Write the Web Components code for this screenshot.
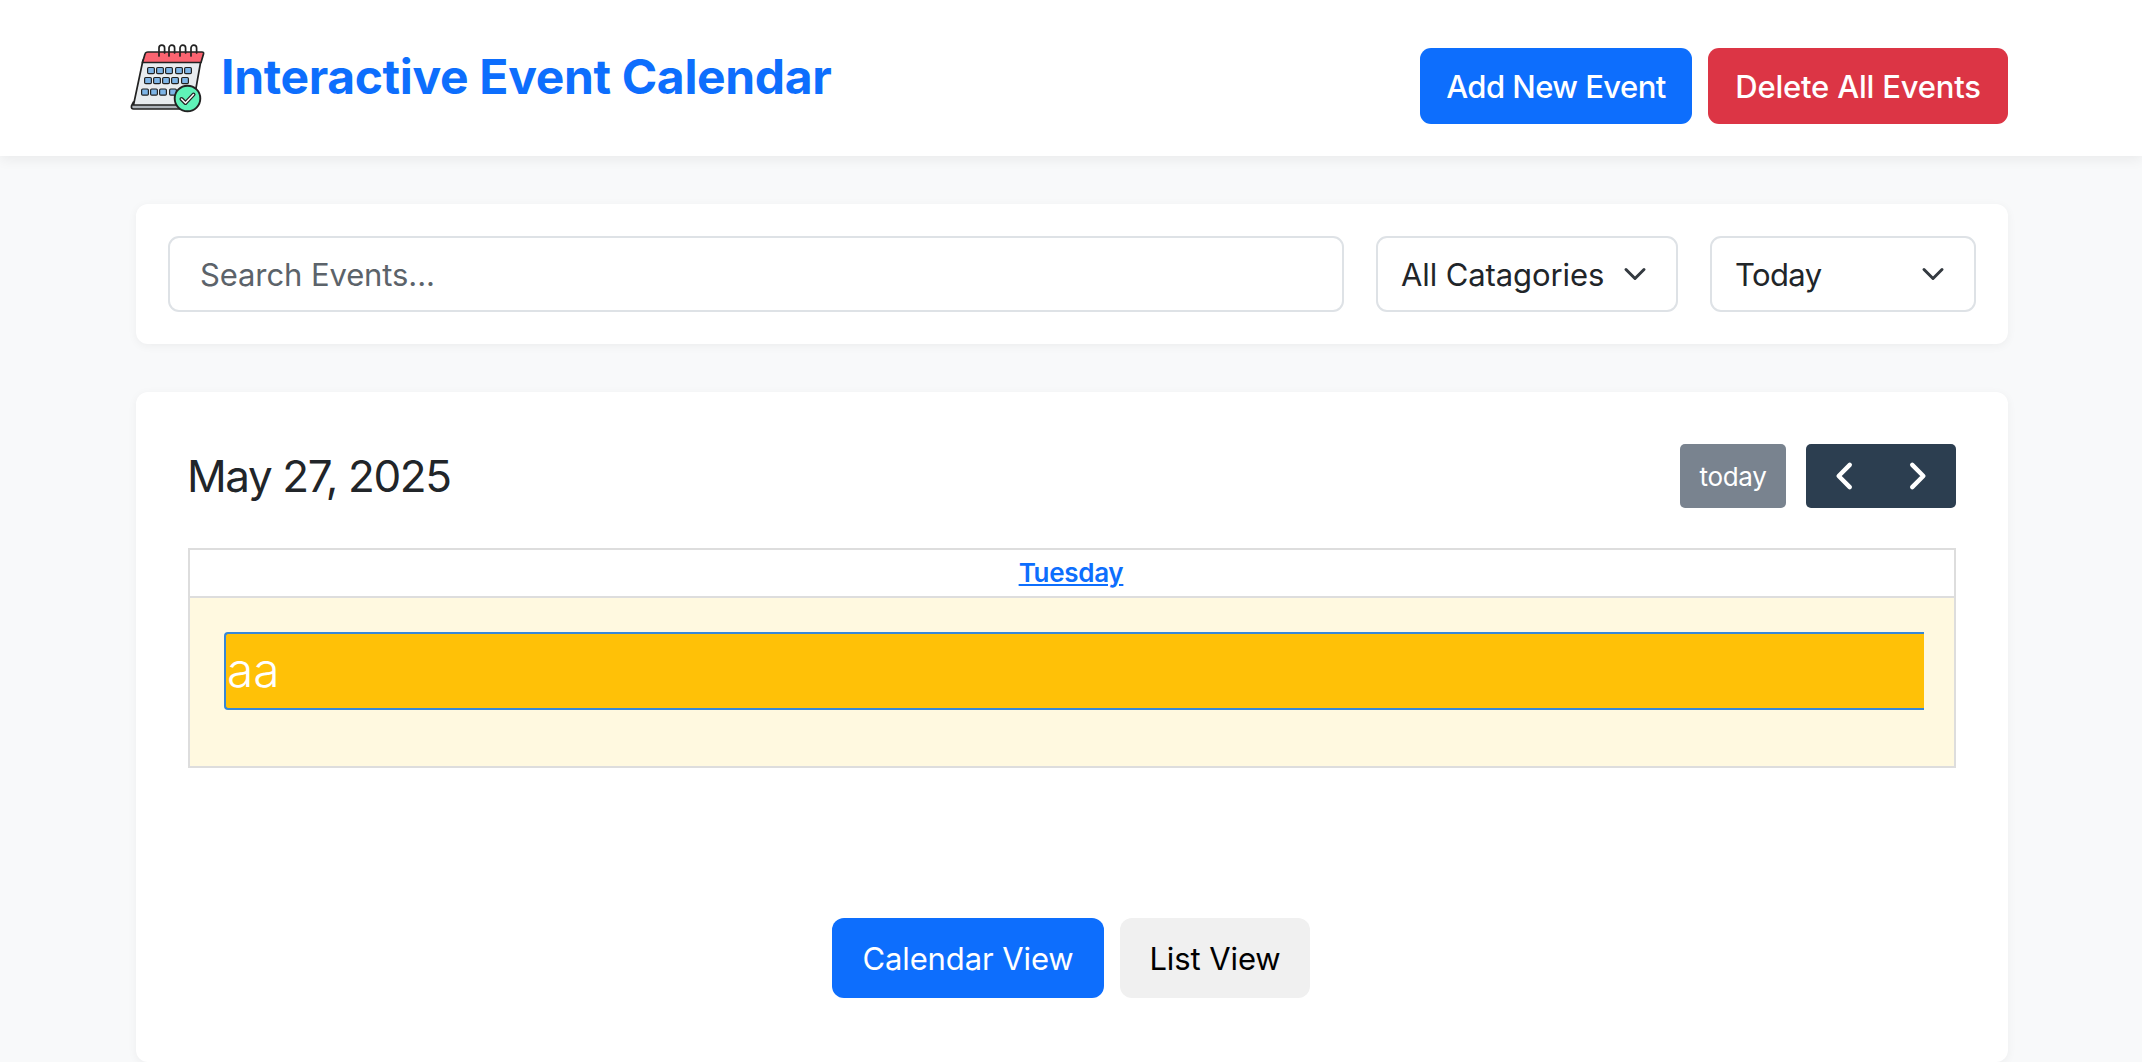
<!DOCTYPE html>
<html lang="en">
<head>
<meta charset="utf-8">
<title>Interactive Event Calendar</title>
<style>
  html, body { margin: 0; padding: 0; }
  body {
    background: #f8f9fa;
    font-family: Inter, "Noto Sans", sans-serif;
    color: #212529;
    overflow: hidden;
    height: 1062px;
  }
</style>
</head>
<body>
<app-header>
  <span slot="title">Interactive Event Calendar</span>
  <app-button slot="actions" kind="primary">Add New Event</app-button>
  <app-button slot="actions" kind="danger">Delete All Events</app-button>
</app-header>
<page-main>
  <filter-bar></filter-bar>
  <event-calendar date="May 27, 2025" weekday="Tuesday">
    <calendar-event>aa</calendar-event>
  </event-calendar>
</page-main>

<script>
class LogoIcon extends HTMLElement {
  constructor() {
    super();
    const shadow = this.attachShadow({ mode: 'open' });
    let cells = '';
    const rows = [
      [27.5, [24, 33, 42, 52, 61]],
      [37.5, [21, 30, 39, 48, 58]],
      [49, [18, 27, 36, 46]]
    ];
    rows.forEach(([y, xs]) => {
      xs.forEach(x => {
        cells += `<rect x="${x - 3.4}" y="${y}" width="6.8" height="6.2" rx="1.2" fill="#7db4e6" stroke="#222" stroke-width="1.2"/>`;
      });
    });
    let rings = '';
    [32, 42, 53, 64].forEach(x => {
      rings += `<path d="M${x} 16 v-8 a2.8 2.8 0 0 1 5.6 0 v5" fill="none" stroke="#222" stroke-width="1.7" stroke-linecap="round"/>`;
    });
    shadow.innerHTML = `
      <style>
        :host { display: block; width: 80px; height: 80px; flex: none; }
        svg { display: block; width: 80px; height: 80px; }
      </style>
      <svg viewBox="0 0 80 80" aria-hidden="true">
        <path d="M6.500 62 L4.500 66 Q4 69 6.500 69 L58 69 L66 62 Z" fill="#aeb4ba" stroke="#222" stroke-width="1.700" stroke-linejoin="round"/>
        <path d="M16 20 L74 20 L66 65 L6.500 65 Z" fill="#e8ecef" stroke="#222" stroke-width="1.700" stroke-linejoin="round"/>
        <path d="M18 14 Q18.500 12 21 12 L75 12 Q77 12 76.500 14 L74 22.500 L15.500 22.500 Z" fill="#fb6471" stroke="#222" stroke-width="1.700" stroke-linejoin="round"/>
        ${rings}
        ${cells}
        <circle cx="60.500" cy="58.500" r="12.800" fill="#5ff2b8" stroke="#222" stroke-width="1.900"/>
        <path d="M54.500 59 L58.500 63 L66.500 54.500" fill="none" stroke="#222" stroke-width="4" stroke-linecap="round" stroke-linejoin="round"/>
        <path d="M54.500 59 L58.500 63 L66.500 54.500" fill="none" stroke="#fff" stroke-width="1.500" stroke-linecap="round" stroke-linejoin="round"/>
      </svg>`;
  }
}

class AppButton extends HTMLElement {
  static get observedAttributes() { return ['kind']; }

  constructor() {
    super();
    const shadow = this.attachShadow({ mode: 'open' });
    shadow.innerHTML = `
      <style>
        :host { display: inline-block; }
        button {
          display: block;
          height: 76px;
          padding: 0;
          border: 0;
          border-radius: 11px;
          font: 500 31px/1 Inter, "Noto Sans", sans-serif;
          color: #fff;
          white-space: nowrap;
        }
        :host([kind="primary"]) button { width: 272px; background: #0d6efd; letter-spacing: -0.55px; }
        :host([kind="danger"]) button { width: 300px; background: #dc3545; letter-spacing: -0.2px; }
      </style>
      <button type="button"><slot></slot></button>`;
  }
}

class AppHeader extends HTMLElement {
  constructor() {
    super();
    const shadow = this.attachShadow({ mode: 'open' });
    shadow.innerHTML = `
      <style>
        :host {
          display: block;
          background: #fff;
          box-shadow: 0 4px 12px rgba(0,0,0,0.06);
          position: relative;
        }
        .bar {
          width: 1872px;
          height: 156px;
          margin-left: 136px;
          box-sizing: border-box;
          padding: 40px 0 32px;
          display: flex;
          justify-content: space-between;
        }
        .brand { display: flex; align-items: flex-start; gap: 14px; margin-left: -9px; }
        h1 {
          margin: 0;
          padding-top: 6px;
          font: 700 48px/62px Inter, "Noto Sans", sans-serif;
          letter-spacing: -0.35px;
          color: #0d6efd;
        }
        .actions { display: flex; align-self: flex-end; gap: 16px; }
      </style>
      <div class="bar">
        <div class="brand">
          <logo-icon></logo-icon>
          <h1><slot name="title"></slot></h1>
        </div>
        <div class="actions"><slot name="actions"></slot></div>
      </div>`;
  }
}

class PageMain extends HTMLElement {
  constructor() {
    super();
    const shadow = this.attachShadow({ mode: 'open' });
    shadow.innerHTML = `
      <style>
        :host {
          display: flex;
          flex-direction: column;
          gap: 48px;
          width: 1872px;
          margin: 48px 0 0 136px;
        }
      </style>
      <slot></slot>`;
  }
}

class FilterBar extends HTMLElement {
  constructor() {
    super();
    const shadow = this.attachShadow({ mode: 'open' });
    const chevron = "url(\"data:image/svg+xml,%3csvg xmlns='http://www.w3.org/2000/svg' viewBox='0 0 16 16'%3e%3cpath fill='none' stroke='%23343a40' stroke-linecap='round' stroke-linejoin='round' stroke-width='2' d='m2 5 6 6 6-6'/%3e%3c/svg%3e\")";
    shadow.innerHTML = `
      <style>
        :host {
          display: flex;
          gap: 32px;
          padding: 32px;
          background: #fff;
          border-radius: 12px;
          box-shadow: 0 2px 10px rgba(0,0,0,0.05);
        }
        input, select {
          box-sizing: border-box;
          height: 76px;
          background-color: #fff;
          border: 2px solid #dee2e6;
          border-radius: 11px;
          font: 400 31px Inter, "Noto Sans", sans-serif;
          letter-spacing: -0.1px;
          color: #212529;
          outline: none;
        }
        input { flex: 1; min-width: 0; padding: 0 30px; }
        input::placeholder { color: #5c636a; opacity: 1; }
        select {
          appearance: none;
          padding: 0 23px;
          background-image: ${chevron};
          background-repeat: no-repeat;
          background-position: right 29px center;
          background-size: 24px 24px;
        }
        .cat { width: 302px; }
        .range { width: 266px; letter-spacing: -0.6px; }
      </style>
      <input type="text" placeholder="Search Events..." aria-label="Search Events">
      <select class="cat" aria-label="Category"><option>All Catagories</option></select>
      <select class="range" aria-label="Range"><option>Today</option></select>`;
  }
}

class CalendarEvent extends HTMLElement {
  constructor() {
    super();
    const shadow = this.attachShadow({ mode: 'open' });
    shadow.innerHTML = `
      <style>
        :host {
          display: block;
          height: 78px;
          box-sizing: border-box;
          background: #ffc107;
          border: 2px solid #3788d8;
          border-right: 0;
          border-radius: 4px 0 0 4px;
          color: #fff;
          font: 300 48px/72px Inter, "Noto Sans", sans-serif;
          padding-left: 1px;
        }
      </style>
      <slot></slot>`;
  }
}

class EventCalendar extends HTMLElement {
  static get observedAttributes() { return ['date', 'weekday']; }

  constructor() {
    super();
    const shadow = this.attachShadow({ mode: 'open' });
    shadow.innerHTML = `
      <style>
        :host {
          display: block;
          box-sizing: border-box;
          height: 670px;
          padding: 52px 52px 0;
          background: #fff;
          border-radius: 12px;
          box-shadow: 0 2px 10px rgba(0,0,0,0.05);
        }
        .toolbar { display: flex; justify-content: space-between; align-items: center; height: 64px; }
        h2 { margin: 0 0 0 -1px; font: 400 44px/1 Inter, "Noto Sans", sans-serif; letter-spacing: -1.4px; color: #212529; }
        .tools { display: flex; gap: 20px; }
        .today, .nav {
          height: 64px;
          border-radius: 5px;
          display: flex;
          align-items: center;
          justify-content: center;
          color: #fff;
        }
        .today { width: 106px; background: #79838f; font-size: 26px; letter-spacing: -0.3px; }
        .nav { width: 150px; background: #2c3e50; gap: 34px; }
        .nav svg { display: block; width: 38px; height: 38px; }
        .grid {
          margin-top: 40px;
          border: 2px solid #ddd;
        }
        .head {
          height: 46px;
          box-sizing: border-box;
          padding-right: 2px;
          display: flex;
          align-items: center;
          justify-content: center;
          border-bottom: 2px solid #ddd;
          height: 48px;
        }
        .head a {
          color: #0d6efd;
          font: 600 26px/1 Inter, "Noto Sans", sans-serif;
          letter-spacing: -0.3px;
          text-decoration: underline;
        }
        .day { height: 168px; box-sizing: border-box; padding: 34px 30px 0 34px; background: #fff9e0; }
        .views { display: flex; justify-content: center; gap: 16px; margin-top: 150px; padding-right: 2px; }
        .views button {
          height: 80px;
          padding: 0;
          border: 0;
          border-radius: 12px;
          font: 400 31px/1 Inter, "Noto Sans", sans-serif;
          letter-spacing: -0.1px;
        }
        .views .on { width: 272px; background: #0d6efd; color: #fff; }
        .views .off { width: 190px; background: #f0f0f0; color: #000; }
      </style>
      <div class="toolbar">
        <h2 id="date"></h2>
        <div class="tools">
          <div class="today">today</div>
          <div class="nav">
            <svg viewBox="0 0 24 24" fill="none" stroke="#fff" stroke-width="2.800" stroke-linecap="round" stroke-linejoin="round"><path d="M15 5 L8 12 L15 19"/></svg>
            <svg viewBox="0 0 24 24" fill="none" stroke="#fff" stroke-width="2.800" stroke-linecap="round" stroke-linejoin="round"><path d="M9 5 L16 12 L9 19"/></svg>
          </div>
        </div>
      </div>
      <div class="grid">
        <div class="head"><a href="#" id="weekday"></a></div>
        <div class="day"><slot></slot></div>
      </div>
      <div class="views">
        <button type="button" class="on">Calendar View</button>
        <button type="button" class="off">List View</button>
      </div>`;
    this.dom = {
      date: shadow.querySelector('#date'),
      weekday: shadow.querySelector('#weekday')
    };
  }

  attributeChangedCallback() { this.updateContent(); }
  connectedCallback() { this.updateContent(); }

  updateContent() {
    this.dom.date.textContent = this.getAttribute('date') || '';
    this.dom.weekday.textContent = this.getAttribute('weekday') || '';
  }
}

customElements.define('logo-icon', LogoIcon);
customElements.define('app-button', AppButton);
customElements.define('app-header', AppHeader);
customElements.define('page-main', PageMain);
customElements.define('filter-bar', FilterBar);
customElements.define('calendar-event', CalendarEvent);
customElements.define('event-calendar', EventCalendar);
</script>
</body>
</html>
